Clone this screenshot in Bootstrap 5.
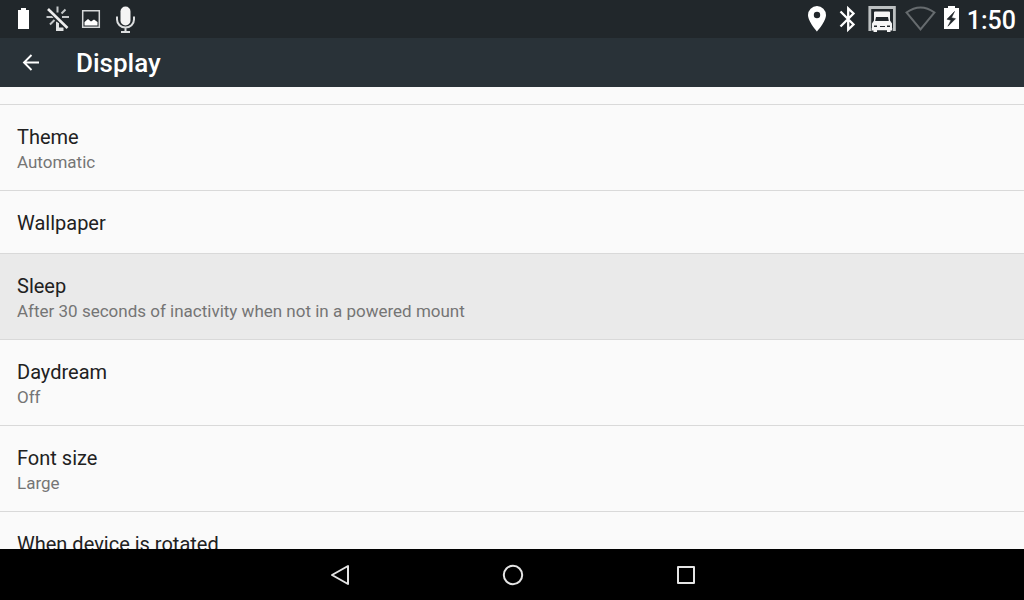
<!DOCTYPE html>
<html lang="en">
<head>
<meta charset="utf-8">
<meta name="viewport" content="width=device-width, initial-scale=1">
<title>Display</title>
<link rel="stylesheet" href="https://cdn.jsdelivr.net/npm/bootstrap@5.3.0/dist/css/bootstrap.min.css">
<style>
body { font-family: Roboto, "Noto Sans", sans-serif; background: #fafafa; }
svg { display: block; flex: none; }
.status-bar { height: 38px; background: #21272b; padding: 0 8px 0 11px; }
.status-icons { gap: 8px; }
.system-icons { gap: 7px; }
.clock { font-size: 25px; line-height: 34px; padding-top: 4px; font-weight: 500; }
.app-bar { height: 49px; background: #293238; padding: 0 18px; gap: 32px; }
.app-bar h1 { font-size: 26px; line-height: 48px; font-weight: 500; }
.settings { padding-top: 17px; }
.setting { padding: 19px 17px 17px; background: #fafafa; border: 0; border-top: 1px solid #d9d9d9; border-radius: 0; }
.setting.pressed { background: #eaeaea; }
.setting-title { font-size: 20px; line-height: 26px; color: #212121; }
.setting-value { font-size: 17px; line-height: 22px; margin-top: 1px; color: #757575; }
.nav-keys { height: 51px; gap: 125px; padding-left: 2px; }
.nav-keys button { width: 48px; height: 48px; }
</style>
</head>
<body class="vh-100 d-flex flex-column overflow-hidden">
<header class="flex-shrink-0 text-white">
  <div class="status-bar d-flex justify-content-between align-items-center">
    <div class="status-icons d-flex" aria-hidden="true">
      <svg width="26" height="28" viewBox="11 5 26 28" fill="#fff"><path d="M18 10h3V8h5v2h3v19H18z"/></svg>
      <svg width="26" height="28" viewBox="45 5 26 28"><path d="M57.500 6.500v6M65.500 9.500l-4 4M62 17h7M46.500 17h7M54.500 20l-4.500 4.500" stroke="#c4c7c9" stroke-width="2" fill="none"/><path d="M56 21.500l3 1.500v4.500h4.500v3.500H56z" fill="#dfe1e2"/><path d="M48 9l19.500 19" stroke="#21272b" stroke-width="4.600"/><path d="M48 9l19.500 19" stroke="#eee" stroke-width="2.600"/></svg>
      <svg width="26" height="28" viewBox="79 5 26 28"><path d="M82.700 10.700h16.600v16.600H82.700z" fill="none" stroke="#d5d8d9" stroke-width="1.500"/><path d="M84.500 25.500v-3.500l3.500-3 3 2.500 3-2 3.500 2.500v3.500z" fill="#fff"/></svg>
      <svg width="26" height="28" viewBox="113 5 26 28"><rect x="120.500" y="6.500" width="10" height="19" rx="5" fill="#f4f4f4"/><path d="M117 16.500v3a8.500 8 0 0 0 17 0v-3M125.500 27v4M121 32h9" stroke="#dcdedf" stroke-width="2" fill="none"/></svg>
    </div>
    <div class="system-icons d-flex align-items-center">
      <svg width="24" height="28" viewBox="805 5 24 28" fill="#fff" aria-hidden="true"><path fill-rule="evenodd" d="M817 6a9 9 0 0 0-9 9c0 6.500 9 16.500 9 16.500S826 21.500 826 15a9 9 0 0 0-9-9zm0 5.800a3.200 3.200 0 1 1 0 6.400 3.200 3.200 0 0 1 0-6.400z"/></svg>
      <svg width="24" height="28" viewBox="836 5 24 28" fill="none" stroke="#fff" stroke-width="2.300" aria-hidden="true"><path d="M840.500 11.500l13 13-5.300 5V8.500l5.300 5-13 13"/></svg>
      <svg width="30" height="28" viewBox="867 5 30 28" aria-hidden="true"><path d="M871.500 29.500h-1.700V7.500h24.600v22h-1.700" fill="none" stroke="#bcc0c1" stroke-width="2.800"/><path fill="#f5f5f5" fill-rule="evenodd" d="M874 12.500q0-1 1-1h14q1 0 1 1v8l2 3v7h-1.500V32H887v-1.700h-10V32h-3.500v-1.500H872v-7l2-3zm2 4.500l-.8 4h13.600l-.8-4zM874 25.500v1.500h3v-1.500zm13 0v1.500h3v-1.500zm-7 .5v1h5v-1z"/></svg>
      <svg width="33" height="28" viewBox="904 5 33 28" fill="none" stroke="#666b6e" stroke-width="2" aria-hidden="true"><path d="M906.500 12.500q14-10 28 0l-14 17z"/></svg>
      <svg width="16" height="28" viewBox="944 5 16 28" aria-hidden="true"><path d="M944 8h4V6h7v2h4v21h-15z" fill="#fff"/><path d="M954.500 11.500l-7.500 7.700 4 1-3 6 7.500-7.500-4-1z" fill="#21272b" stroke="#21272b" stroke-width=".6"/></svg>
      <span class="clock">1:50</span>
    </div>
  </div>
  <div class="app-bar d-flex align-items-center">
    <button type="button" class="btn p-0 border-0 text-white" aria-label="Navigate up"><svg width="26" height="26" viewBox="18 50 26 26" fill="none" stroke="#fff" stroke-width="1.900"><path d="M39 62.500H23.500M31.500 55l-7.500 7.500 7.500 7.500"/></svg></button>
    <h1 class="m-0">Display</h1>
  </div>
</header>
<main class="settings flex-fill overflow-hidden">
  <div class="d-flex flex-column">
    <button type="button" class="setting text-start"><span class="setting-title d-block">Theme</span><span class="setting-value d-block">Automatic</span></button>
    <button type="button" class="setting text-start"><span class="setting-title d-block">Wallpaper</span></button>
    <button type="button" class="setting pressed text-start"><span class="setting-title d-block">Sleep</span><span class="setting-value d-block">After 30 seconds of inactivity when not in a powered mount</span></button>
    <button type="button" class="setting text-start"><span class="setting-title d-block">Daydream</span><span class="setting-value d-block">Off</span></button>
    <button type="button" class="setting text-start"><span class="setting-title d-block">Font size</span><span class="setting-value d-block">Large</span></button>
    <button type="button" class="setting text-start"><span class="setting-title d-block">When device is rotated</span></button>
  </div>
</main>
<nav class="nav-keys bg-black flex-shrink-0 d-flex justify-content-center align-items-center" aria-label="System navigation">
  <button type="button" class="btn p-0 border-0 d-flex justify-content-center align-items-center" aria-label="Back"><svg width="24" height="24" viewBox="0 0 24 24" fill="none" stroke="#e4e4e4" stroke-width="2" stroke-linejoin="round"><path d="M20 3v18L4 12z"/></svg></button>
  <button type="button" class="btn p-0 border-0 d-flex justify-content-center align-items-center" aria-label="Home"><svg width="24" height="24" viewBox="0 0 24 24" fill="none" stroke="#e4e4e4" stroke-width="2"><circle cx="12" cy="12" r="9.200"/></svg></button>
  <button type="button" class="btn p-0 border-0 d-flex justify-content-center align-items-center" aria-label="Overview"><svg width="24" height="24" viewBox="0 0 24 24" fill="none" stroke="#e4e4e4" stroke-width="2" stroke-linejoin="round"><path d="M4 4h16v16H4z"/></svg></button>
</nav>
<script src="https://cdn.jsdelivr.net/npm/bootstrap@5.3.0/dist/js/bootstrap.bundle.min.js"></script>
</body>
</html>
